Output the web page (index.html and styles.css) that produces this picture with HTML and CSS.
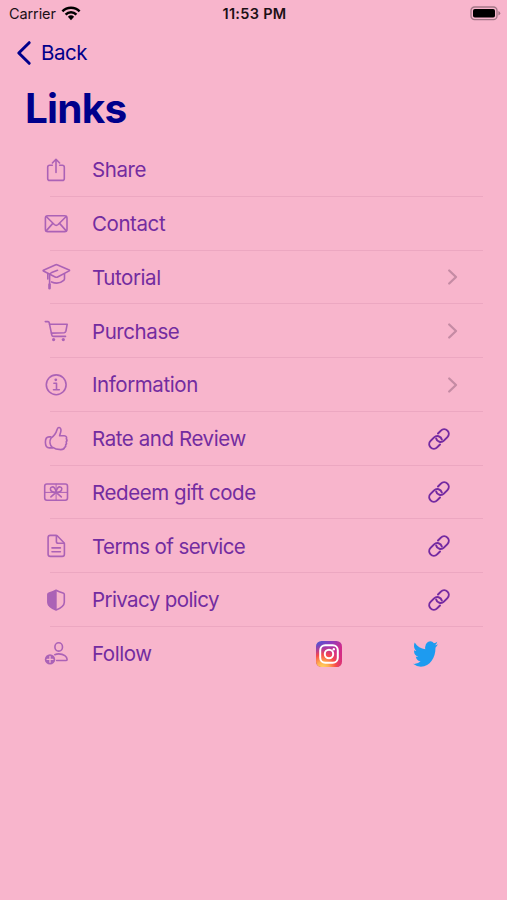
FILE: index.html
```html
<!DOCTYPE html>
<html lang="en">
<head>
    <meta charset="UTF-8">
    <meta name="viewport" content="width=device-width, initial-scale=1.0">
    <title>Links</title>
    <link rel="stylesheet" href="styles.css">
</head>
<body>
    <!-- Shared symbols -->
    <svg class="symbols" width="0" height="0">
        <symbol id="chevron" viewBox="0 0 12 18">
            <path d="M2.2 2.5 L9 9 L2.2 15.5"/>
        </symbol>
        <symbol id="link" viewBox="0 0 24 24">
            <g transform="rotate(-45 12 12)">
                <path d="M8.8 16.6 H4.7 a4.6 4.6 0 0 1 0 -9.2 H9.7 a4.6 4.6 0 0 1 3.9 7"/>
                <path d="M15.2 7.4 H19.3 a4.6 4.6 0 0 1 0 9.2 H14.3 a4.6 4.6 0 0 1 -3.9 -7"/>
            </g>
        </symbol>
    </svg>

    <header class="status-bar">
        <div class="carrier">
            <span>Carrier</span>
            <svg class="wifi" viewBox="0 0 20 15">
                <path d="M1.4 5.3 A12 12 0 0 1 18.6 5.3"/>
                <path d="M4.6 8.6 A7.6 7.6 0 0 1 15.4 8.6"/>
                <path class="dot" d="M6.9 10.8 A4.5 4.5 0 0 1 13.1 10.8 L10 14.2 Z"/>
            </svg>
        </div>
        <span class="time">11:53 PM</span>
        <svg class="battery" viewBox="0 0 31 15">
            <rect class="shell" x="1" y="1" width="26" height="12.6" rx="3.6"/>
            <rect class="charge" x="3" y="3" width="22" height="8.6" rx="1.8"/>
            <path class="cap" d="M28.4 5 Q30.3 5.8 30.3 7.3 Q30.3 8.8 28.4 9.6 Z"/>
        </svg>
    </header>

    <nav class="nav-bar">
        <svg class="back-arrow" viewBox="0 0 16 26">
            <path d="M13.2 2.7 L2.8 13 L13.2 23.3"/>
        </svg>
        <span>Back</span>
    </nav>

    <h1>Links</h1>

    <ul class="links">
        <li>
            <svg class="icon" viewBox="0 0 40 40">
                <path d="M16.3 15.3 H13.7 Q11.7 15.3 11.7 17.3 V28.4 Q11.7 30.4 13.7 30.4 H26.3 Q28.3 30.4 28.3 28.4 V17.3 Q28.3 15.3 26.3 15.3 H23.7"/>
                <path d="M20 22.5 V9.5 M16.4 13 L20 9.3 L23.6 13"/>
            </svg>
            <span class="label">Share</span>
        </li>
        <li>
            <svg class="icon" viewBox="0 0 40 40">
                <rect x="9.4" y="11.7" width="21.6" height="15.9" rx="2.4"/>
                <path d="M10.2 12.5 L18.3 20.5 Q20.2 22.2 22.1 20.5 L30.2 12.5 M10.2 26.9 L16.8 19.4 M30.2 26.9 L23.6 19.4"/>
            </svg>
            <span class="label">Contact</span>
        </li>
        <li>
            <svg class="icon" viewBox="0 0 40 40">
                <path d="M7.4 13.3 L19.2 7.9 Q20.4 7.4 21.6 7.9 L33.2 13 Q33.9 13.4 33.2 13.9 L21.6 20 Q20.4 20.6 19.2 20 L7.4 14 Q6.9 13.6 7.4 13.3 Z"/>
                <path d="M21.5 13.3 L15.7 15.4 Q13.6 16.2 13.6 18.4 V30.5"/>
                <path class="thick" d="M13.5 27.6 V31.2"/>
                <path d="M11.8 16.6 V22 M28.5 17 V21.7 Q28.5 22.6 27.7 23.3 C24.4 26.2 19.5 26.6 15.6 24.9"/>
            </svg>
            <span class="label">Tutorial</span>
            <svg class="chevron"><use href="#chevron"/></svg>
        </li>
        <li>
            <svg class="icon" viewBox="0 0 40 40">
                <path d="M9.3 10.6 H12 Q13 10.6 13.2 11.6 L15.8 24.1 Q16.1 25.4 17.4 25.4 H29.5"/>
                <path d="M13.6 13.2 H31.2 L29.9 20.2 Q29.6 21.6 28.2 21.7 L15.4 22.1"/>
                <circle class="fill" cx="17.6" cy="28.6" r="1.6"/>
                <circle class="fill" cx="27.3" cy="28.6" r="1.6"/>
            </svg>
            <span class="label">Purchase</span>
            <svg class="chevron"><use href="#chevron"/></svg>
        </li>
        <li>
            <svg class="icon" viewBox="0 0 40 40">
                <circle cx="20.2" cy="19.8" r="9.9"/>
                <circle class="fill" cx="19.8" cy="14.8" r="1.4"/>
                <path d="M17.9 18.3 H20.5 V24.7 M17.5 24.8 H23.3"/>
            </svg>
            <span class="label">Information</span>
            <svg class="chevron"><use href="#chevron"/></svg>
        </li>
        <li>
            <svg class="icon" viewBox="0 0 40 40">
                <path d="M15 19.1 C18.2 16.8 20.1 13.9 21 10.7 C21.5 8.8 22.3 8.3 23.2 8.5 C25 8.9 25.3 11 24.7 13 L23.6 16.7 H28.2 C30.4 16.7 31.1 18.6 30.3 19.8 C31.1 20.8 31.1 22 30.2 22.9 C30.8 24.1 30.5 25.1 29.6 25.8 C30 27 29.5 28 28.5 28.5 C28.2 30.2 26.8 30.6 24.8 30.6 C21.1 30.6 18.5 29.8 16.2 28.2 C13.7 26.2 13.2 22 15 19.1 Z"/>
                <path d="M14.8 17.9 H13 C10.7 17.9 9.4 20.2 9.4 23.2 C9.4 26.5 11 28.9 13.4 28.9 H16.5"/>
            </svg>
            <span class="label">Rate and Review</span>
            <svg class="link"><use href="#link"/></svg>
        </li>
        <li>
            <svg class="icon" viewBox="0 0 40 40">
                <rect x="8.7" y="12" width="22.8" height="16.2" rx="2.2"/>
                <path class="thin" d="M9 20.4 H31.2 M20.1 12.2 V28.2"/>
                <path d="M20.1 20.3 C17 20.6 14.2 19.2 14.4 16.7 C14.6 14.7 17.1 14.3 18.5 16 C19.6 17.3 20 18.7 20.1 20.3 C20.2 18.7 20.6 17.3 21.7 16 C23.1 14.3 25.6 14.7 25.8 16.7 C26 19.2 23.2 20.6 20.1 20.3 Z M20.1 20.4 L14.9 24.9 M20.1 20.4 L25.3 24.9"/>
            </svg>
            <span class="label">Redeem gift code</span>
            <svg class="link"><use href="#link"/></svg>
        </li>
        <li>
            <svg class="icon" viewBox="0 0 40 40">
                <path d="M20 9.4 H14.3 Q12.1 9.4 12.1 11.6 V28.2 Q12.1 30.4 14.3 30.4 H26.2 Q28.4 30.4 28.4 28.2 V17.6 Q28.4 17.1 28 16.7 L21.2 9.8 Q20.8 9.4 20 9.4 Z"/>
                <path d="M20.4 9.9 V15.4 Q20.4 17.3 22.3 17.3 H27.9 M16 21.9 H24.4 M16 25.8 H24.4"/>
            </svg>
            <span class="label tight">Terms of service</span>
            <svg class="link"><use href="#link"/></svg>
        </li>
        <li>
            <svg class="icon" viewBox="0 0 40 40">
                <path d="M20.1 10.3 Q23 12 27 13 Q28.3 13.3 28.3 14.4 V22.2 C28.3 26 25.5 27.8 20.1 30 C14.7 27.8 11.9 26 11.9 22.2 V14.4 Q11.9 13.3 13.2 13 Q17.2 12 20.1 10.3 Z"/>
                <path class="fill" d="M20.7 10 Q17.2 12 13.2 13 Q11.6 13.3 11.6 14.4 V22.2 C11.6 26 14.7 27.8 20.7 30 Z"/>
            </svg>
            <span class="label tight">Privacy policy</span>
            <svg class="link"><use href="#link"/></svg>
        </li>
        <li>
            <svg class="icon" viewBox="0 0 40 40">
                <ellipse cx="22.7" cy="12.9" rx="3.8" ry="4.2"/>
                <path d="M18.8 20.7 Q20.5 19.9 22.7 19.9 C28 19.9 31 22.9 31.1 25.4 Q31.1 26.5 29.8 26.5 H20.6"/>
                <circle class="fill" cx="14" cy="25.4" r="5.2"/>
                <path class="plus" d="M14 22.5 V28.3 M11.1 25.4 H16.9"/>
            </svg>
            <span class="label">Follow</span>
            <div class="social">
                <svg class="instagram" viewBox="0 0 26 26">
                    <defs>
                        <linearGradient id="sky" x1="0" y1="0" x2="1" y2="1">
                            <stop offset="0" stop-color="#4858d0"/>
                            <stop offset="0.3" stop-color="#8a3cc0"/>
                            <stop offset="0.6" stop-color="#d02c8c"/>
                            <stop offset="1" stop-color="#d82c78"/>
                        </linearGradient>
                        <radialGradient id="sun" cx="0.25" cy="1.05" r="0.95">
                            <stop offset="0" stop-color="#ffd868"/>
                            <stop offset="0.25" stop-color="#ffb050"/>
                            <stop offset="0.55" stop-color="#f84c48"/>
                            <stop offset="1" stop-color="#d02c8c" stop-opacity="0"/>
                        </radialGradient>
                    </defs>
                    <rect width="26" height="26" rx="5.5" fill="url(#sky)"/>
                    <rect width="26" height="26" rx="5.5" fill="url(#sun)"/>
                    <rect class="line" x="4.2" y="4.2" width="17.6" height="17.6" rx="5"/>
                    <circle class="line" cx="13" cy="13" r="4.2"/>
                    <circle cx="17.8" cy="8.2" r="1.2" fill="#fff"/>
                </svg>
                <svg class="twitter" viewBox="0 2 24 20" preserveAspectRatio="none">
                    <path d="M23.95 4.57a10 10 0 0 1-2.82.78 4.96 4.96 0 0 0 2.16-2.72c-.95.55-2 .96-3.13 1.18a4.92 4.92 0 0 0-8.38 4.48C7.69 8.09 4.07 6.13 1.64 3.16a4.93 4.93 0 0 0 1.52 6.57 4.9 4.9 0 0 1-2.23-.61v.06a4.92 4.92 0 0 0 3.95 4.83 5 5 0 0 1-2.21.08 4.94 4.94 0 0 0 4.6 3.42A9.87 9.87 0 0 1 0 19.54a13.99 13.99 0 0 0 7.56 2.21c9.05 0 14-7.5 14-13.98 0-.21 0-.42-.02-.63a9.94 9.94 0 0 0 2.41-2.57z"/>
                </svg>
            </div>
        </li>
    </ul>
</body>
</html>
```
FILE: styles.css
```css
* {
    box-sizing: border-box;
}
body {
    margin: 0;
    min-height: 100vh;
    background: #f8b5cc;
    color: #00008b;
    font-family: Inter, "Liberation Sans", sans-serif;
}
svg {
    display: block;
    fill: none;
    stroke-linecap: round;
    stroke-linejoin: round;
}
.symbols {
    display: none;
}

/* Status bar */
.status-bar {
    display: grid;
    grid-template-columns: 1fr auto 1fr;
    align-items: center;
    height: 27px;
    padding: 0 7px 0 9px;
    font-size: 14.5px;
    color: #1c1016;
}
.carrier {
    display: flex;
    align-items: center;
    gap: 5px;
    letter-spacing: -0.1px;
}
.wifi {
    width: 20px;
    height: 15px;
    stroke: #000;
    stroke-width: 2.5;
    stroke-linecap: butt;
}
.wifi .dot {
    fill: #000;
    stroke: none;
}
.time {
    font-weight: 600;
    letter-spacing: 0.3px;
}
.battery {
    width: 31px;
    height: 15px;
    justify-self: end;
    margin-right: -1px;
}
.battery .shell {
    stroke: #a27686;
    stroke-width: 1.3;
}
.battery .charge {
    fill: #000;
}
.battery .cap {
    fill: #a27686;
}

/* Navigation */
.nav-bar {
    display: flex;
    align-items: center;
    gap: 9px;
    height: 50px;
    padding: 1px 0 0 16px;
    font-size: 20.5px;
    letter-spacing: -0.45px;
}
.back-arrow {
    width: 16px;
    height: 26px;
    stroke: #00008b;
    stroke-width: 3;
}
h1 {
    height: 66px;
    margin: 0;
    padding-left: 25px;
    font-size: 40.5px;
    line-height: 64px;
    font-weight: 700;
    letter-spacing: -0.8px;
}

/* Links list */
.links {
    list-style: none;
    margin: 0;
    padding: 0 24px 0 36px;
}
.links li {
    display: flex;
    align-items: center;
    height: 53.75px;
    padding-right: 32px;
    background: linear-gradient(#eca7c1, #eca7c1) no-repeat right bottom / calc(100% - 14px) 1px;
}
.links li:last-child {
    background: none;
}
.icon {
    width: 40px;
    height: 40px;
    margin-right: 16px;
    stroke: #ab62b6;
    stroke-width: 1.6;
}
.icon .fill {
    fill: #ab62b6;
    stroke: none;
}
.icon .thick {
    stroke-width: 2.5;
}
.icon .thin {
    stroke-width: 1;
}
.icon .plus {
    stroke: #f8b5cc;
    stroke-width: 1.3;
}
.label {
    flex: 1;
    font-size: 20.5px;
    letter-spacing: -0.42px;
    color: #732ca0;
}
.label.tight {
    letter-spacing: -0.6px;
}
.chevron {
    width: 12px;
    height: 18px;
    margin-right: -8px;
    stroke: #c58ba4;
    stroke-width: 2.3;
}
.link {
    width: 24px;
    height: 24px;
    stroke: #742aa1;
    stroke-width: 2;
}
.social {
    display: flex;
    align-items: center;
    gap: 71px;
    margin-right: 13px;
}
.instagram {
    width: 26px;
    height: 26px;
}
.instagram .line {
    stroke: #fff;
    stroke-width: 2;
}
.twitter {
    width: 25px;
    height: 26px;
    fill: #1d9bf0;
}
```
